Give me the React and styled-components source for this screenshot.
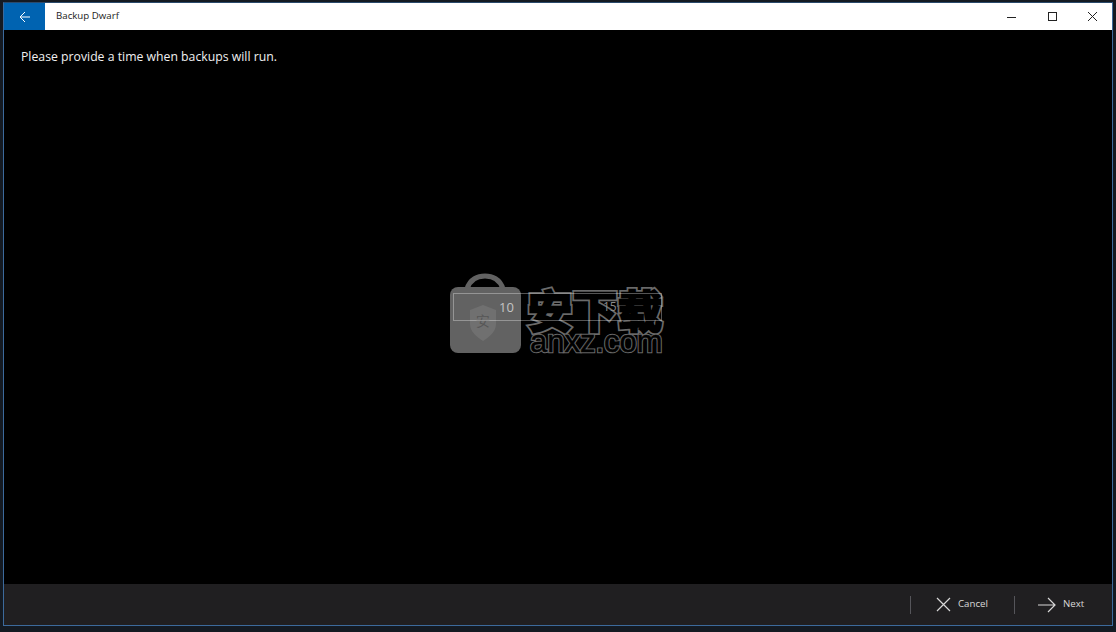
import React from 'react';
import styled, { createGlobalStyle } from 'styled-components';

const GlobalStyle = createGlobalStyle`
	html,
	body {
		margin: 0;
		padding: 0;
		background: #141a22;
	}
`;

const Desktop = styled.div`
	box-sizing: border-box;
	width: 1116px;
	height: 632px;
	padding: 2px 3px 6px 3px;
	background: #141a22;
	overflow: hidden;
	font-family: 'Open Sans', 'Liberation Sans', sans-serif;
`;

const Window = styled.div`
	box-sizing: border-box;
	height: 100%;
	display: flex;
	flex-direction: column;
	border: 1px solid #3c6a9c;
	border-top-color: #2a4a6c;
	background: #000;
`;

const TitleBar = styled.div`
	display: flex;
	align-items: center;
	height: 27px;
	background: #fff;
	flex-shrink: 0;
`;

const BackButton = styled.div`
	display: flex;
	align-items: center;
	justify-content: center;
	width: 41px;
	height: 100%;
	background: #0063b1;
`;

const AppTitle = styled.div`
	margin: 0 0 2px 11px;
	flex: 1;
	font-size: 9.7px;
	color: #222;
`;

const WindowControl = styled.div`
	display: flex;
	align-items: center;
	justify-content: center;
	width: 40px;
	height: 100%;
`;

const Content = styled.div`
	position: relative;
	flex: 1;
	padding: 18px 17px;
`;

const Prompt = styled.div`
	font-size: 12.25px;
	line-height: 18px;
	color: #f0f0f0;
`;

const Watermark = styled.div`
	position: absolute;
	left: 446px;
	top: 243px;
	width: 216px;
	height: 84px;
`;

const SliderBox = styled.div`
	position: absolute;
	left: 3px;
	top: 20px;
	box-sizing: border-box;
	width: 209px;
	height: 28px;
	border: 1px solid rgba(255, 255, 255, 0.33);
`;

const Tick = styled.span`
	position: absolute;
	left: ${p => p.$left}px;
	top: ${p => p.$top}px;
	font-size: ${p => p.$size}px;
	color: ${p => p.$color};
`;

const OutlinedText = styled.div`
	position: absolute;
	left: ${p => p.$left}px;
	top: ${p => p.$top}px;
	font-family: ${p => p.$family};
	font-size: ${p => p.$size}px;
	line-height: ${p => p.$line}px;
	font-weight: ${p => p.$weight};
	letter-spacing: ${p => p.$spacing}px;
	white-space: nowrap;
	color: #000;
	-webkit-text-stroke: ${p => p.$stroke}px #6a6a6a;

	&::after {
		content: attr(data-text);
		position: absolute;
		left: 0;
		top: 0;
		-webkit-text-stroke: ${p => p.$inner}px #000;
	}
`;

const ActionBar = styled.div`
	display: flex;
	align-items: center;
	justify-content: flex-end;
	height: 41px;
	flex-shrink: 0;
	background: #201f21;
`;

const Divider = styled.div`
	width: 1px;
	height: 18px;
	background: #55555a;
`;

const Action = styled.div`
	display: flex;
	align-items: center;
	gap: ${p => p.$gap}px;
	width: ${p => p.$width}px;
	padding-left: ${p => p.$pad}px;
	box-sizing: border-box;
	font-size: 9.7px;
	color: #d8d8d8;

	span {
		margin-bottom: 2px;
	}
`;

export default function App() {
	return (
		<>
			<GlobalStyle />
			<Desktop>
				<Window>
					<TitleBar>
						<BackButton>
							<svg width="12" height="12" viewBox="0 0 12 12" fill="none" stroke="#fff" strokeWidth="1">
								<path d="M11 6H1M6 1L1 6l5 5" />
							</svg>
						</BackButton>
						<AppTitle>Backup Dwarf</AppTitle>
						<WindowControl>
							<svg width="10" height="10" viewBox="0 0 10 10" stroke="#222" fill="none">
								<path d="M0 5.5h9" />
							</svg>
						</WindowControl>
						<WindowControl>
							<svg width="9" height="9" viewBox="0 0 9 9" stroke="#222" fill="none">
								<rect x="0.5" y="0.5" width="8" height="8" />
							</svg>
						</WindowControl>
						<WindowControl>
							<svg width="9" height="9" viewBox="0 0 9 9" stroke="#222" fill="none">
								<path d="M0 0l9 9M9 0L0 9" />
							</svg>
						</WindowControl>
					</TitleBar>
					<Content>
						<Prompt>Please provide a time when backups will run.</Prompt>
						<Watermark>
							<svg width="76" height="84" viewBox="0 0 76 84">
								<path d="M17 16C20 6 28 3 35 3s15 3 18 13" fill="none" stroke="#626262" strokeWidth="5" />
								<rect x="0" y="14" width="71" height="66" rx="8" fill="#626262" />
								<path d="M20 37l13-5 13 5v14c0 8-7 13-13 17-6-4-13-9-13-17z" fill="#707070" />
							</svg>
							<Tick $left={26} $top={38} $size={14} $color="#565656">安</Tick>
							<OutlinedText
								$left={78}
								$top={7}
								$family="'Noto Sans CJK SC', sans-serif"
								$size={44}
								$line={58}
								$weight={700}
								$spacing={1}
								$stroke={6}
								$inner={2.5}
								data-text="安下载"
							>
								安下载
							</OutlinedText>
							<OutlinedText
								$left={80}
								$top={51}
								$family="'Liberation Sans', sans-serif"
								$size={31}
								$line={36}
								$weight={400}
								$spacing={0}
								$stroke={2.5}
								$inner={0.5}
								data-text="anxz.com"
							>
								anxz.com
							</OutlinedText>
							<SliderBox />
							<Tick $left={49} $top={25} $size={13} $color="#c4c4c4">10</Tick>
							<Tick $left={153} $top={25} $size={12} $color="#8a8a8a">15</Tick>
						</Watermark>
					</Content>
					<ActionBar>
						<Divider />
						<Action $width={103} $pad={25} $gap={7}>
							<svg width="15" height="15" viewBox="0 0 15 15" fill="none" stroke="#d8d8d8" strokeWidth="1.2">
								<path d="M1 1l13 13M14 1L1 14" />
							</svg>
							<span>Cancel</span>
						</Action>
						<Divider />
						<Action $width={97} $pad={23} $gap={7}>
							<svg width="18" height="16" viewBox="0 0 18 16" fill="none" stroke="#d8d8d8" strokeWidth="1.2">
								<path d="M0 8h17M10 1l7 7-7 7" />
							</svg>
							<span>Next</span>
						</Action>
					</ActionBar>
				</Window>
			</Desktop>
		</>
	);
}
